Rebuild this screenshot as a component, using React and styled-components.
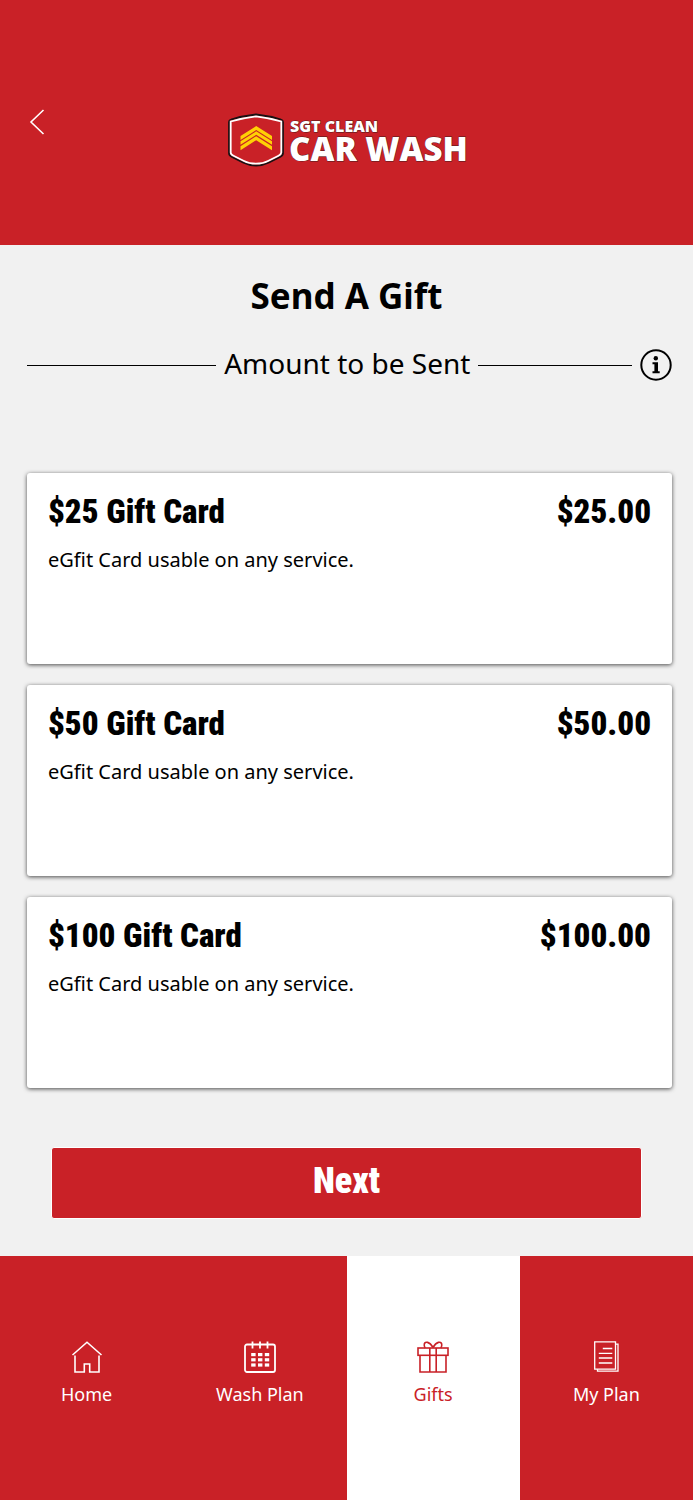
import React, { useState } from "react";
import styled, { createGlobalStyle } from "styled-components";

const RED = "#c92127";

const giftCards = [
  { id: 1, name: "$25 Gift Card", price: "$25.00" },
  { id: 2, name: "$50 Gift Card", price: "$50.00" },
  { id: 3, name: "$100 Gift Card", price: "$100.00" },
];

const HomeIcon = () => (
  <svg width="32" height="34" viewBox="0 0 32 34" fill="none" stroke="currentColor" strokeWidth="1.6">
    <path d="M1.5 15 16 2.2 30.500 15" />
    <path d="M4 15.500V32h9.300v-8h5.400v8H28V15.500" />
  </svg>
);

const CalendarIcon = () => (
  <svg width="32" height="34" viewBox="0 0 32 34" fill="none" stroke="currentColor" strokeWidth="1.8">
    <rect x="1" y="4.500" width="30" height="27.500" rx="2" />
    <path d="M8.500 1.500v7M16 1.500v7M23.500 1.500v7" />
    <g fill="currentColor" stroke="none">
      {[13, 18.2, 23.4].map((y) =>
        [7.2, 14, 20.8].map((x) => (
          <rect key={`${x}-${y}`} x={x} y={y} width="4.4" height="3.2" />
        ))
      )}
    </g>
  </svg>
);

const GiftIcon = () => (
  <svg width="32" height="34" viewBox="0 0 32 34" fill="none" stroke="currentColor" strokeWidth="1.6">
    <rect x="1" y="8" width="30" height="7.300" />
    <path d="M3 15.300V32h26V15.300" />
    <path d="M12.800 8v24M19.200 8v24" />
    <path d="M16 7.500C12.500 1.500 8 1 7.300 4 7 5.500 7.400 7 8.200 8M16 7.500c3.500-6 8-6.500 8.700-3.500.3 1.500-.1 3-.9 4" />
  </svg>
);

const DocumentIcon = () => (
  <svg width="32" height="34" viewBox="0 0 32 34" fill="none" stroke="currentColor" strokeWidth="1.3">
    <path d="M4.700 1.800h20.800v27.400H4.700z" />
    <path d="M25.500 4.200H28v27H7.500v-2" />
    <path d="M12.800 8.500h9.500M8.800 13.300h13.500M8.800 18h13.500M8.800 23h13.500" />
  </svg>
);

const BackIcon = () => (
  <svg width="16" height="26" viewBox="0 0 16 26" fill="none" stroke="currentColor" strokeWidth="1.6">
    <path d="M14.500 1 2 13l12.500 12" />
  </svg>
);

const InfoIcon = () => (
  <svg width="32" height="32" viewBox="0 0 32 32" fill="none">
    <circle cx="16" cy="16" r="14.700" stroke="currentColor" strokeWidth="2" />
    <circle cx="15.800" cy="9.300" r="2.200" fill="currentColor" />
    <path d="M12.500 13.300h5.500v9h1.700v2h-7.200v-2h1.900v-7h-1.900z" fill="currentColor" />
  </svg>
);

const Logo = () => (
  <svg width="240" height="60" viewBox="0 0 240 60" role="img" aria-label="SGT Clean Car Wash">
    <path
      d="M29 2.500Q42 4 54 7.500Q56 8 56 10V41Q56 43.500 53 45L42 50.500Q36 53.500 29 53.500Q22 53.500 16 50.500L5 45Q2 43.500 2 41V10Q2 8 4 7.500Q16 4 29 2.500Z"
      fill={RED}
      stroke="#1a1012"
      strokeWidth="1.800"
    />
    <path
      d="M29 4.300Q43 6 54.300 9.500V40.500Q54 42.500 51.500 43.800L41 49Q36 51.700 29 51.700Q22 51.700 17 49L6.500 43.800Q3.700 42.500 3.700 40.500V9.500Q15 6 29 4.300Z"
      fill="none"
      stroke="#fff"
      strokeWidth="1.800"
    />
    <g fill="#ffd105">
      <path d="M13.500 24 29.200 14 45 24V28L29.200 18 13.500 28Z" />
      <path d="M13.500 29.300 29.200 19.300 45 29.300V32.800L29.200 22.800 13.500 32.800Z" />
      <path d="M13.500 34.200 29.200 24.200 45 34.200V38.200L29.200 28.200 13.500 38.200Z" />
    </g>
    <g fill="#fff" stroke="#4a1a1c" strokeWidth="0.800" paintOrder="stroke" fontFamily="Open Sans, sans-serif" fontWeight="800">
      <text x="63" y="20" fontSize="16">SGT CLEAN</text>
      <text x="62" y="49" fontSize="33">CAR WASH</text>
    </g>
  </svg>
);

const tabs = [
  { name: "Home", icon: <HomeIcon /> },
  { name: "Wash Plan", icon: <CalendarIcon /> },
  { name: "Gifts", icon: <GiftIcon /> },
  { name: "My Plan", icon: <DocumentIcon /> },
];

export default function App() {
  const [selected, setSelected] = useState(null);

  return (
    <Page>
      <GlobalStyle />
      <Header>
        <BackButton type="button" aria-label="Back">
          <BackIcon />
        </BackButton>
        <Logo />
      </Header>
      <Main>
        <Title>Send A Gift</Title>
        <SectionRow>
          <Line $grow={192} />
          <SectionName>Amount to be Sent</SectionName>
          <Line $grow={156} />
          <InfoButton type="button" aria-label="Information">
            <InfoIcon />
          </InfoButton>
        </SectionRow>
        <CardList>
          {giftCards.map((item) => (
            <Card
              key={item.id}
              type="button"
              aria-pressed={selected === item.id}
              onClick={() => setSelected(item.id)}
            >
              <CardTop>
                <span>{item.name}</span>
                <span>{item.price}</span>
              </CardTop>
              <CardText>eGfit Card usable on any service.</CardText>
            </Card>
          ))}
        </CardList>
        <NextButton type="button">Next</NextButton>
      </Main>
      <TabBar>
        {tabs.map((tab) => (
          <Tab
            key={tab.name}
            href="#"
            $active={tab.name === "Gifts"}
            aria-current={tab.name === "Gifts" ? "page" : undefined}
          >
            {tab.icon}
            <span>{tab.name}</span>
          </Tab>
        ))}
      </TabBar>
    </Page>
  );
}

const GlobalStyle = createGlobalStyle`
  * {
    box-sizing: border-box;
  }
  body {
    margin: 0;
    background: #f1f1f1;
    color: #000;
    font-family: "Noto Sans", sans-serif;
  }
  button {
    padding: 0;
    border: 0;
    background: none;
    color: inherit;
    font: inherit;
    cursor: pointer;
  }
  svg {
    display: block;
    flex: none;
  }
`;

const Page = styled.div`
  display: flex;
  flex-direction: column;
  min-height: 100vh;
`;

const Header = styled.header`
  display: grid;
  grid-template-columns: 1fr auto 1fr;
  padding: 109px 29px 73px;
  background: ${RED};
  color: #fff;

  > svg {
    margin-top: 3px;
  }
`;

const BackButton = styled.button`
  justify-self: start;
  align-self: start;
`;

const Main = styled.main`
  flex: 1;
  display: flex;
  flex-direction: column;
  padding: 27px 21px 37px 27px;
`;

const Title = styled.h1`
  margin: 0;
  padding-right: 6px;
  font-size: 35px;
  line-height: 48px;
  font-weight: 700;
  text-align: center;
`;

const SectionRow = styled.div`
  display: flex;
  align-items: center;
  gap: 8px;
  margin-top: 29px;
`;

const Line = styled.span`
  flex: ${(props) => props.$grow} 1 0;
  height: 1px;
  background: #000;
`;

const SectionName = styled.h2`
  margin: 0;
  padding-bottom: 4px;
  font-size: 28px;
  line-height: 28px;
  font-weight: 400;
`;

const InfoButton = styled.button`
  flex: none;
`;

const CardList = styled.div`
  display: flex;
  flex-direction: column;
  gap: 21px;
  margin-top: 92px;
`;

const Card = styled.button`
  display: flex;
  flex-direction: column;
  justify-content: flex-start;
  min-height: 191px;
  padding: 19px 21px;
  border-radius: 3px;
  background: #fff;
  box-shadow: 0 1px 4px rgba(0, 0, 0, 0.7);
  text-align: left;
`;

const CardTop = styled.span`
  display: flex;
  justify-content: space-between;
  align-self: stretch;
  font-family: "Roboto Condensed", Roboto, sans-serif;
  font-size: 33px;
  line-height: 40px;
  font-weight: 900;
`;

const CardText = styled.span`
  margin-top: 12px;
  font-size: 20px;
  line-height: 32px;
`;

const NextButton = styled.button`
  height: 72px;
  margin: 59px 30px 0 24px;
  padding-bottom: 4px;
  border: 1px solid #fff;
  border-radius: 3px;
  background: ${RED};
  color: #fff;
  font-family: "Roboto Condensed", Roboto, sans-serif;
  font-size: 36px;
  font-weight: 900;
`;

const TabBar = styled.nav`
  display: grid;
  grid-template-columns: repeat(4, 1fr);
`;

const Tab = styled.a`
  display: flex;
  flex-direction: column;
  align-items: center;
  gap: 7px;
  padding: 84px 0 93px;
  background: ${(props) => (props.$active ? "#fff" : RED)};
  color: ${(props) => (props.$active ? RED : "#fff")};
  font-size: 18px;
  line-height: 26px;
  text-decoration: none;
`;
